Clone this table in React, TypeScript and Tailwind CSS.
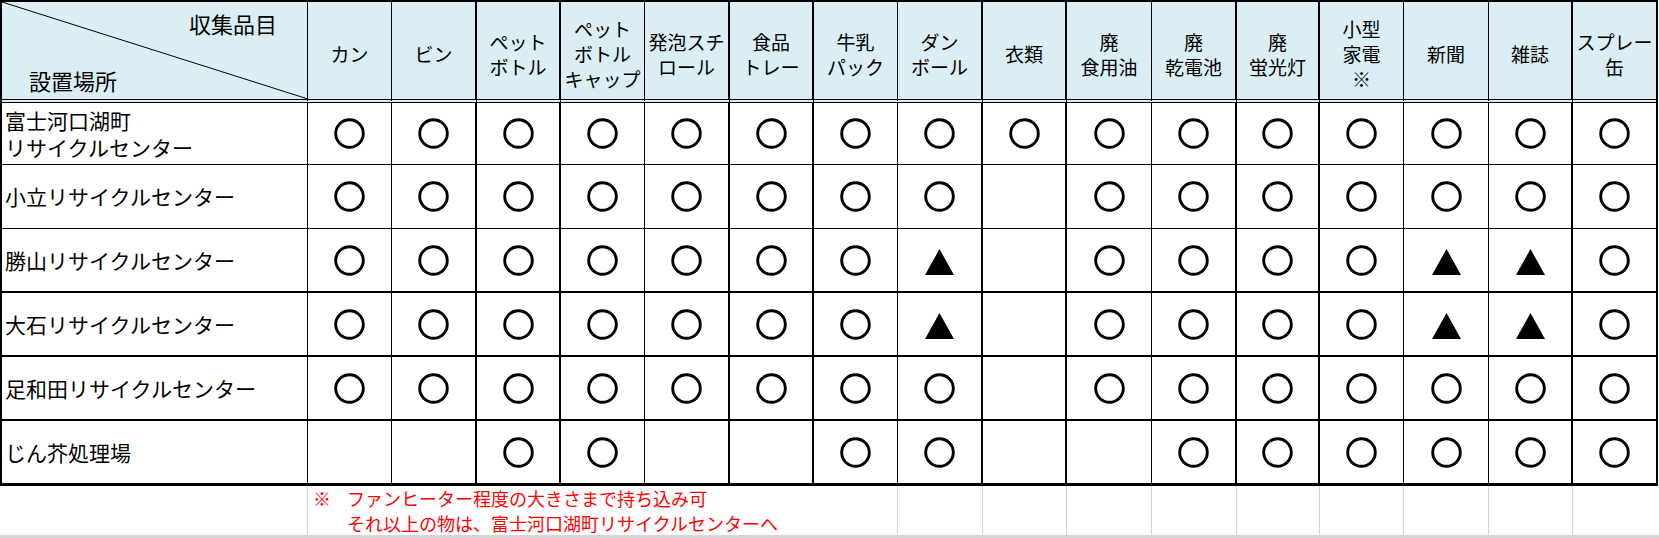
import React from "react";

const GRID =
  "grid grid-cols-[306px_84px_85px_84px_84px_85px_84px_84px_85px_84px_85px_85px_83px_84px_85px_84px_83px]";

const RIGHT = [
  "border-r",
  "border-r",
  "border-r-2",
  "border-r-2",
  "border-r",
  "border-r-2",
  "border-r-2",
  "border-r",
  "border-r-2",
  "border-r-2",
  "border-r",
  "border-r-2",
  "border-r-2",
  "border-r",
  "border-r",
  "border-r-2",
  "",
];

const HEADERS: string[][] = [
  ["カン"],
  ["ビン"],
  ["ペット", "ボトル"],
  ["ペット", "ボトル", "キャップ"],
  ["発泡スチ", "ロール"],
  ["食品", "トレー"],
  ["牛乳", "パック"],
  ["ダン", "ボール"],
  ["衣類"],
  ["廃", "食用油"],
  ["廃", "乾電池"],
  ["廃", "蛍光灯"],
  ["小型", "家電", "※"],
  ["新聞"],
  ["雑誌"],
  ["スプレー", "缶"],
];

type Row = { label: string[]; cells: string; bottom: string; h: string };

const ROWS: Row[] = [
  { label: ["富士河口湖町", "リサイクルセンター"], cells: "oooooooooooooooo", bottom: "border-b", h: "h-[62px]" },
  { label: ["小立リサイクルセンター"], cells: "oooooooo-ooooooo", bottom: "border-b", h: "h-[64px]" },
  { label: ["勝山リサイクルセンター"], cells: "ooooooot-oooottoo".slice(0, 16), bottom: "border-b-2", h: "h-[64px]" },
  { label: ["大石リサイクルセンター"], cells: "ooooooot-oooottoo".slice(0, 16), bottom: "border-b-2", h: "h-[64px]" },
  { label: ["足和田リサイクルセンター"], cells: "oooooooo-ooooooo", bottom: "border-b-2", h: "h-[64px]" },
  { label: ["じん芥処理場"], cells: "--oo--oo--oooooo", bottom: "border-b-[3px]", h: "h-[65px]" },
];

function Circle() {
  return (
    <svg width="31" height="31" viewBox="0 0 31 31">
      <circle cx="15.5" cy="15.5" r="13.8" fill="none" stroke="#000" strokeWidth="2.9" />
    </svg>
  );
}

function Triangle() {
  return (
    <svg width="29" height="26" viewBox="0 0 29 26" className="mt-[3px]">
      <polygon points="14.5,0 29,26 0,26" fill="#000" />
    </svg>
  );
}

export default function App() {
  return (
    <div className="w-[1659px] h-[538px] bg-white text-black font-['Noto_Sans_CJK_JP',sans-serif] flex flex-col overflow-hidden">
      {/* table */}
      <div className="w-[1658px] border-x-2 border-t-2 border-black">
        {/* header */}
        <div className={`${GRID} h-[101px]`}>
          <div className="relative border-r border-b-4 border-double border-black bg-[#daeef3] flex flex-col justify-between">
            <svg className="absolute inset-0" width="306" height="97" viewBox="0 0 306 97">
              <line x1="0" y1="0" x2="306" y2="97" stroke="#000" strokeWidth="1" />
            </svg>
            <div className="relative self-end pr-[30px] pt-[6px] text-[22px] leading-[30px]">収集品目</div>
            <div className="relative self-start pl-[27px] pb-[4px] text-[22px] leading-[30px]">設置場所</div>
          </div>
          {HEADERS.map((lines, i) => (
            <div
              key={i}
              className={`${RIGHT[i + 1]} border-b-4 border-double border-black bg-[#daeef3] flex flex-col items-center justify-center pt-[6px] text-[19px] leading-[25px] whitespace-nowrap`}
            >
              {lines.map((l, j) => (
                <div key={j}>{l}</div>
              ))}
            </div>
          ))}
        </div>
        {/* body rows */}
        {ROWS.map((r, ri) => (
          <div key={ri} className={`${GRID} ${r.h}`}>
            <div className={`${RIGHT[0]} ${r.bottom} border-black flex flex-col justify-center pl-[3px] text-[21px] leading-[27px] whitespace-nowrap`}>
              {r.label.map((l, j) => (
                <div key={j}>{l}</div>
              ))}
            </div>
            {r.cells.split("").map((c, ci) => (
              <div key={ci} className={`${RIGHT[ci + 1]} ${r.bottom} border-black flex items-center justify-center`}>
                {c === "o" ? <Circle /> : c === "t" ? <Triangle /> : null}
              </div>
            ))}
          </div>
        ))}
      </div>
      {/* notes area */}
      <div className={`${GRID} w-[1658px] px-[2px] h-[49px]`}>
        <div className="border-r border-[#d4d4d4]" />
        <div className="col-span-7 border-r border-[#d4d4d4] pl-[5px] text-[18px] leading-[25px] text-[#ff0000] whitespace-nowrap">
          <div className="flex">
            <span className="w-[34px]">※</span>
            <span>ファンヒーター程度の大きさまで持ち込み可</span>
          </div>
          <div className="pl-[34px]">それ以上の物は、富士河口湖町リサイクルセンターへ</div>
        </div>
        <div className="border-r border-[#d4d4d4]" />
        <div className="border-r border-[#d4d4d4]" />
        <div className="border-r border-[#d4d4d4]" />
        <div className="border-r border-[#d4d4d4]" />
        <div className="border-r border-[#d4d4d4]" />
        <div className="border-r border-[#d4d4d4]" />
        <div className="border-r border-[#d4d4d4]" />
        <div className="border-r border-[#d4d4d4]" />
        <div />
      </div>
      <div className="w-[1659px] h-[3px] bg-[#d6d6d6]" />
    </div>
  );
}
